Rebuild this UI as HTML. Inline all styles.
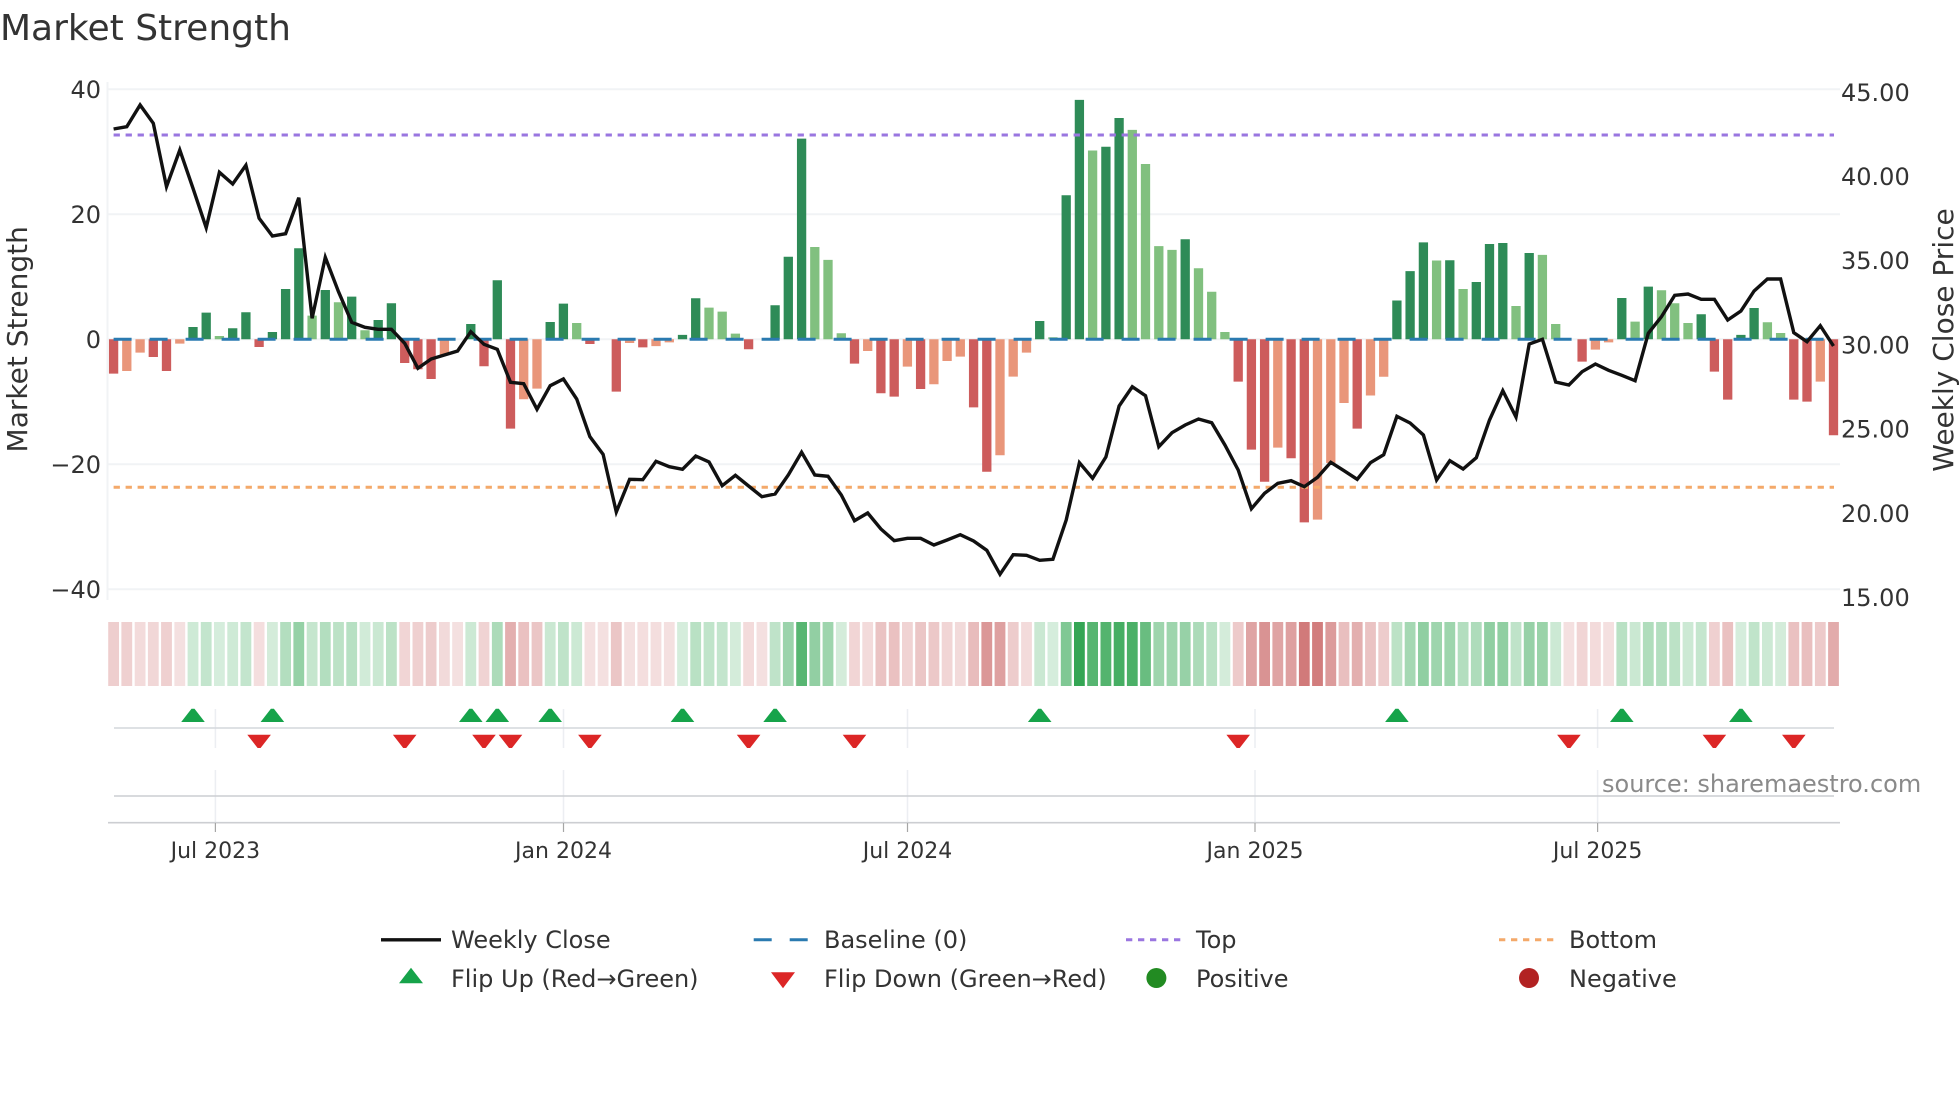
<!DOCTYPE html>
<html lang="en">
<head>
<meta charset="utf-8">
<title>Market Strength</title>
<style>
html,body{margin:0;padding:0;background:#fff;width:1960px;height:1102px;overflow:hidden}
svg{display:block}
text{font-family:"DejaVu Sans",sans-serif;fill:#333}
.y{font-size:24px}
.x{font-size:22px;text-anchor:middle}
.l{font-size:24px}
</style>
</head>
<body>
<svg width="1960" height="1102" viewBox="0 0 1960 1102" xmlns="http://www.w3.org/2000/svg">
<rect width="1960" height="1102" fill="#fff"/>
<text x="0" y="40" font-size="36">Market Strength</text>

<!-- grid -->
<g stroke="#f1f3f5" stroke-width="2" fill="none">
<path d="M108 89.3H1840M108 214.3H1840M108 339.3H1840M108 464.3H1840M108 589.3H1840"/>
<path d="M107.5 82V600"/>
</g>

<!-- bars -->
<g transform="translate(0 339.3) scale(1 -6.25)" fill="none" stroke-width="9.3">
<path stroke="#2e8b57" d="M193 0V1.97M206.2 0V4.27M232.7 0V1.76M245.9 0V4.32M272.4 0V1.17M285.6 0V8.05M298.8 0V14.56M325.3 0V7.89M351.7 0V6.83M378.2 0V3.09M391.4 0V5.76M470.8 0V2.45M497.3 0V9.44M550.2 0V2.77M563.4 0V5.7M682.5 0V.7M695.7 0V6.56M775.1 0V5.44M788.3 0V13.2M801.6 0V32.1M1039.7 0V2.93M1066.2 0V23.04M1079.4 0V38.3M1105.9 0V30.8M1119.1 0V35.4M1185.2 0V16M1396.9 0V6.2M1410.1 0V10.9M1423.4 0V15.5M1449.8 0V12.64M1476.3 0V9.17M1489.5 0V15.25M1502.8 0V15.4M1529.2 0V13.8M1621.8 0V6.6M1648.3 0V8.43M1701.2 0V4M1740.9 0V.7M1754.1 0V5"/>
<path stroke="#81c07f" d="M219.4 0V.53M312.1 0V3.79M338.5 0V5.92M365 0V1.44M576.7 0V2.6M709 0V5.07M722.2 0V4.43M735.4 0V.9M814.8 0V14.77M828 0V12.7M841.3 0V.96M1052.9 0V.32M1092.6 0V30.2M1132.3 0V33.5M1145.5 0V28.05M1158.8 0V14.9M1172 0V14.3M1198.5 0V11.36M1211.7 0V7.6M1224.9 0V1.17M1436.6 0V12.6M1463.1 0V8.05M1516 0V5.33M1542.4 0V13.5M1555.7 0V2.45M1635.1 0V2.83M1661.5 0V7.84M1674.7 0V5.76M1688 0V2.6M1767.4 0V2.72M1780.6 0V1"/>
<path stroke="#cd5c5c" d="M113.6 0V-5.5M153.3 0V-2.83M166.5 0V-5.07M259.1 0V-1.23M404.7 0V-3.79M417.9 0V-4.8M431.1 0V-6.35M484 0V-4.32M510.5 0V-14.3M589.9 0V-.75M616.3 0V-8.37M642.8 0V-1.3M748.6 0V-1.6M854.5 0V-3.9M880.9 0V-8.64M894.2 0V-9.17M920.6 0V-7.95M973.6 0V-10.9M986.8 0V-21.2M1238.2 0V-6.77M1251.4 0V-17.65M1264.6 0V-22.8M1291.1 0V-19.04M1304.3 0V-29.3M1357.2 0V-14.3M1582.1 0V-3.57M1714.4 0V-5.17M1727.7 0V-9.65M1793.8 0V-9.65M1807 0V-9.97M1833.5 0V-15.36"/>
<path stroke="#e9967a" d="M126.8 0V-5.07M140.1 0V-2.13M179.8 0V-.7M444.4 0V-2.5M523.7 0V-9.6M537 0V-7.9M629.6 0V-.6M656 0V-1.1M669.3 0V-.5M867.7 0V-1.87M907.4 0V-4.37M933.9 0V-7.2M947.1 0V-3.47M960.3 0V-2.77M1000 0V-18.56M1013.2 0V-5.97M1026.5 0V-2.13M1277.8 0V-17.33M1317.5 0V-28.85M1330.8 0V-19.8M1344 0V-10.2M1370.5 0V-9M1383.7 0V-6M1595.4 0V-1.65M1608.6 0V-.5M1820.3 0V-6.77"/>
</g>

<!-- reference lines -->
<g fill="none">
<path d="M113.6 339.3H1834" stroke="#2a7ab0" stroke-width="3" stroke-dasharray="18 18"/>
<path d="M113.6 135H1834" stroke="#9a76e0" stroke-width="3" stroke-dasharray="6.3 5.7"/>
<path d="M113.6 487.3H1834" stroke="#f4a96a" stroke-width="3" stroke-dasharray="6.3 5.7"/>
</g>

<!-- weekly close -->
<polyline fill="none" stroke="#111" stroke-width="3.4" stroke-linejoin="miter" points="113.6,129 126.8,126.7 140.1,105 153.3,123.3 166.5,186.7 179.8,150 193,188.3 206.2,227.7 219.4,172.3 232.7,184 245.9,165.3 259.1,218.3 272.4,236 285.6,233.7 298.8,197.7 312.1,318.3 325.3,257.3 338.5,291.7 351.7,322.3 365,327.3 378.2,329.3 391.4,329.3 404.7,343.3 417.9,368.3 431.1,359 444.4,355 457.6,351 470.8,331.7 484,344.3 497.3,349.3 510.5,382.3 523.7,383.7 537,409.3 550.2,385.7 563.4,379 576.7,399 589.9,436.7 603.1,454.3 616.3,512 629.6,479.3 642.8,479.7 656,461.3 669.3,466.7 682.5,469.3 695.7,456 709,462 722.2,485.7 735.4,475.3 748.6,486 761.9,496.7 775.1,494 788.3,475 801.6,452.3 814.8,475 828,476.3 841.3,495 854.5,520.7 867.7,513 880.9,529 894.2,540.7 907.4,538.3 920.6,538.3 933.9,545 947.1,540 960.3,534.7 973.6,541 986.8,550.3 1000,574.3 1013.2,554.7 1026.5,555.3 1039.7,560.3 1052.9,559.3 1066.2,520 1079.4,462.7 1092.6,478.3 1105.9,457 1119.1,406 1132.3,386.7 1145.5,395.7 1158.8,446.7 1172,432.7 1185.2,425 1198.5,419 1211.7,422.7 1224.9,445 1238.2,470 1251.4,508.7 1264.6,493.3 1277.8,483.3 1291.1,480.7 1304.3,486.7 1317.5,477.3 1330.8,462.3 1344,470.7 1357.2,479.3 1370.5,462.7 1383.7,454.7 1396.9,416.3 1410.1,423 1423.4,435 1436.6,480 1449.8,460.7 1463.1,469 1476.3,457.7 1489.5,420 1502.8,390.7 1516,417 1529.2,344 1542.4,339.3 1555.7,382 1568.9,385 1582.1,371.7 1595.4,364 1608.6,370.3 1621.8,375.3 1635.1,380.7 1648.3,333.3 1661.5,316.7 1674.7,295.3 1688,294 1701.2,299.3 1714.4,299.3 1727.7,320 1740.9,311 1754.1,291 1767.4,279 1780.6,279 1793.8,332.7 1807,341.7 1820.3,325.7 1833.5,346"/>

<!-- heat strip -->
<g fill="none" stroke-width="10.8" stroke="#b22222">
<path opacity=".22" d="M113.6 622v64"/><path opacity=".21" d="M126.8 622v64"/><path opacity=".16" d="M140.1 622v64"/><path opacity=".18" d="M153.3 622v64"/><path opacity=".21" d="M166.5 622v64"/><path opacity=".14" d="M179.8 622v64"/><path opacity=".15" d="M259.1 622v64"/><path opacity=".19" d="M404.7 622v64"/><path opacity=".21" d="M417.9 622v64"/><path opacity=".23" d="M431.1 622v64"/><path opacity=".17" d="M444.4 622v64"/><path opacity=".14" d="M457.6 622v64"/><path opacity=".2" d="M484 622v64"/><path opacity=".36" d="M510.5 622v64"/><path opacity=".28" d="M523.7 622v64"/><path opacity=".26" d="M537 622v64"/><path opacity=".14" d="M589.9 622v64"/><path opacity=".14" d="M603.1 622v64"/><path opacity=".26" d="M616.3 622v64"/><path opacity=".14" d="M629.6 622v64"/><path opacity=".15" d="M642.8 622v64"/><path opacity=".15" d="M656 622v64"/><path opacity=".14" d="M669.3 622v64"/><path opacity=".16" d="M748.6 622v64"/><path opacity=".14" d="M761.9 622v64"/><path opacity=".19" d="M854.5 622v64"/><path opacity=".16" d="M867.7 622v64"/><path opacity=".27" d="M880.9 622v64"/><path opacity=".28" d="M894.2 622v64"/><path opacity=".2" d="M907.4 622v64"/><path opacity=".26" d="M920.6 622v64"/><path opacity=".25" d="M933.9 622v64"/><path opacity=".19" d="M947.1 622v64"/><path opacity=".17" d="M960.3 622v64"/><path opacity=".3" d="M973.6 622v64"/><path opacity=".47" d="M986.8 622v64"/><path opacity=".43" d="M1000 622v64"/><path opacity=".23" d="M1013.2 622v64"/><path opacity=".16" d="M1026.5 622v64"/><path opacity=".24" d="M1238.2 622v64"/><path opacity=".41" d="M1251.4 622v64"/><path opacity=".49" d="M1264.6 622v64"/><path opacity=".41" d="M1277.8 622v64"/><path opacity=".43" d="M1291.1 622v64"/><path opacity=".6" d="M1304.3 622v64"/><path opacity=".59" d="M1317.5 622v64"/><path opacity=".45" d="M1330.8 622v64"/><path opacity=".29" d="M1344 622v64"/><path opacity=".36" d="M1357.2 622v64"/><path opacity=".27" d="M1370.5 622v64"/><path opacity=".23" d="M1383.7 622v64"/><path opacity=".14" d="M1568.9 622v64"/><path opacity=".19" d="M1582.1 622v64"/><path opacity=".16" d="M1595.4 622v64"/><path opacity=".14" d="M1608.6 622v64"/><path opacity=".21" d="M1714.4 622v64"/><path opacity=".28" d="M1727.7 622v64"/><path opacity=".28" d="M1793.8 622v64"/><path opacity=".29" d="M1807 622v64"/><path opacity=".24" d="M1820.3 622v64"/><path opacity=".38" d="M1833.5 622v64"/>
</g>
<g fill="none" stroke-width="10.8" stroke="#189a3c">
<path opacity=".21" d="M193 622v64"/><path opacity=".26" d="M206.2 622v64"/><path opacity=".18" d="M219.4 622v64"/><path opacity=".21" d="M232.7 622v64"/><path opacity=".26" d="M245.9 622v64"/><path opacity=".19" d="M272.4 622v64"/><path opacity=".33" d="M285.6 622v64"/><path opacity=".46" d="M298.8 622v64"/><path opacity=".25" d="M312.1 622v64"/><path opacity=".33" d="M325.3 622v64"/><path opacity=".29" d="M338.5 622v64"/><path opacity=".31" d="M351.7 622v64"/><path opacity=".2" d="M365 622v64"/><path opacity=".23" d="M378.2 622v64"/><path opacity=".29" d="M391.4 622v64"/><path opacity=".22" d="M470.8 622v64"/><path opacity=".36" d="M497.3 622v64"/><path opacity=".23" d="M550.2 622v64"/><path opacity=".28" d="M563.4 622v64"/><path opacity=".22" d="M576.7 622v64"/><path opacity=".18" d="M682.5 622v64"/><path opacity=".3" d="M695.7 622v64"/><path opacity=".27" d="M709 622v64"/><path opacity=".26" d="M722.2 622v64"/><path opacity=".19" d="M735.4 622v64"/><path opacity=".28" d="M775.1 622v64"/><path opacity=".43" d="M788.3 622v64"/><path opacity=".72" d="M801.6 622v64"/><path opacity=".47" d="M814.8 622v64"/><path opacity=".42" d="M828 622v64"/><path opacity=".19" d="M841.3 622v64"/><path opacity=".23" d="M1039.7 622v64"/><path opacity=".18" d="M1052.9 622v64"/><path opacity=".55" d="M1066.2 622v64"/><path opacity=".88" d="M1079.4 622v64"/><path opacity=".73" d="M1092.6 622v64"/><path opacity=".74" d="M1105.9 622v64"/><path opacity=".8" d="M1119.1 622v64"/><path opacity=".78" d="M1132.3 622v64"/><path opacity=".65" d="M1145.5 622v64"/><path opacity=".42" d="M1158.8 622v64"/><path opacity=".42" d="M1172 622v64"/><path opacity=".45" d="M1185.2 622v64"/><path opacity=".36" d="M1198.5 622v64"/><path opacity=".3" d="M1211.7 622v64"/><path opacity=".19" d="M1224.9 622v64"/><path opacity=".29" d="M1396.9 622v64"/><path opacity=".39" d="M1410.1 622v64"/><path opacity=".48" d="M1423.4 622v64"/><path opacity=".42" d="M1436.6 622v64"/><path opacity=".42" d="M1449.8 622v64"/><path opacity=".33" d="M1463.1 622v64"/><path opacity=".35" d="M1476.3 622v64"/><path opacity=".48" d="M1489.5 622v64"/><path opacity=".48" d="M1502.8 622v64"/><path opacity=".28" d="M1516 622v64"/><path opacity=".45" d="M1529.2 622v64"/><path opacity=".44" d="M1542.4 622v64"/><path opacity=".22" d="M1555.7 622v64"/><path opacity=".3" d="M1621.8 622v64"/><path opacity=".23" d="M1635.1 622v64"/><path opacity=".34" d="M1648.3 622v64"/><path opacity=".33" d="M1661.5 622v64"/><path opacity=".29" d="M1674.7 622v64"/><path opacity=".22" d="M1688 622v64"/><path opacity=".25" d="M1701.2 622v64"/><path opacity=".18" d="M1740.9 622v64"/><path opacity=".27" d="M1754.1 622v64"/><path opacity=".22" d="M1767.4 622v64"/><path opacity=".19" d="M1780.6 622v64"/>
</g>

<!-- lower panel lines -->
<g fill="none">
<path d="M215.4 709V748M563.5 709V748M907.5 709V748M1255 709V748M1597.6 709V748M215.4 770V823M563.5 770V823M907.5 770V823M1255 770V823M1597.6 770V823" stroke="#eceef2" stroke-width="1.5"/>
<path d="M114 728H1834" stroke="#d4d7dc" stroke-width="1.6"/>
<path d="M114 796H1834" stroke="#ccced2" stroke-width="1.6"/>
<path d="M108 822.7H1840" stroke="#ccced2" stroke-width="1.6"/>
<path d="M215.4 823V832M563.5 823V832M907.5 823V832M1255 823V832M1597.6 823V832" stroke="#a6a6a6" stroke-width="1.2"/>
</g>

<!-- flips -->
<path fill="#16a34a" d="M181.2 722h23.6l-10.3-13.3h-3zM260.6 722h23.6l-10.3-13.3h-3zM459 722h23.6l-10.3-13.3h-3zM485.5 722h23.6l-10.3-13.3h-3zM538.4 722h23.6l-10.3-13.3h-3zM670.7 722h23.6l-10.3-13.3h-3zM763.3 722h23.6l-10.3-13.3h-3zM1027.9 722h23.6l-10.3-13.3h-3zM1385.1 722h23.6l-10.3-13.3h-3zM1610 722h23.6l-10.3-13.3h-3zM1729.1 722h23.6l-10.3-13.3h-3z"/>
<path fill="#dc2626" d="M247.3 734.7h23.6l-10.3 13.3h-3zM392.9 734.7h23.6l-10.3 13.3h-3zM472.2 734.7h23.6l-10.3 13.3h-3zM498.7 734.7h23.6l-10.3 13.3h-3zM578.1 734.7h23.6l-10.3 13.3h-3zM736.8 734.7h23.6l-10.3 13.3h-3zM842.7 734.7h23.6l-10.3 13.3h-3zM1226.4 734.7h23.6l-10.3 13.3h-3zM1557.1 734.7h23.6l-10.3 13.3h-3zM1702.6 734.7h23.6l-10.3 13.3h-3zM1782 734.7h23.6l-10.3 13.3h-3z"/>

<!-- axis labels -->
<g class="y" text-anchor="end">
<text x="101" y="98">40</text>
<text x="101" y="223">20</text>
<text x="101" y="348">0</text>
<text x="101" y="473">−20</text>
<text x="101" y="598">−40</text>
</g>
<g class="y">
<text x="1841" y="101">45.00</text>
<text x="1841" y="185">40.00</text>
<text x="1841" y="269">35.00</text>
<text x="1841" y="353.5">30.00</text>
<text x="1841" y="437.5">25.00</text>
<text x="1841" y="522">20.00</text>
<text x="1841" y="606">15.00</text>
</g>
<text transform="translate(27 339.3) rotate(-90)" font-size="28" text-anchor="middle">Market Strength</text>
<text transform="translate(1953 340) rotate(-90)" font-size="28" text-anchor="middle">Weekly Close Price</text>
<g class="x">
<text x="215.4" y="858">Jul 2023</text>
<text x="563.5" y="858">Jan 2024</text>
<text x="907.5" y="858">Jul 2024</text>
<text x="1255" y="858">Jan 2025</text>
<text x="1597.6" y="858">Jul 2025</text>
</g>
<text x="1602" y="792" font-size="24" style="fill:#8a8a8a">source: sharemaestro.com</text>

<!-- legend -->
<g fill="none">
<path d="M381 939.8H441" stroke="#111" stroke-width="3.4"/>
<path d="M753.7 939.8H808" stroke="#2a7ab0" stroke-width="3" stroke-dasharray="18 18"/>
<path d="M1126 939.8H1181" stroke="#9a76e0" stroke-width="3" stroke-dasharray="6.3 5.7"/>
<path d="M1499 939.8H1554" stroke="#f4a96a" stroke-width="3" stroke-dasharray="6.3 5.7"/>
</g>
<path fill="#16a34a" d="M399 983.3h24l-12-15.6z"/>
<path fill="#dc2626" d="M771 972.3h24l-12 16z"/>
<circle cx="1156.4" cy="978" r="10" fill="#228b22"/>
<circle cx="1529" cy="978" r="10" fill="#b22222"/>
<g class="l">
<text x="451" y="948">Weekly Close</text>
<text x="824" y="948">Baseline (0)</text>
<text x="1196" y="948">Top</text>
<text x="1569" y="948">Bottom</text>
<text x="451" y="987">Flip Up (Red→Green)</text>
<text x="824" y="987">Flip Down (Green→Red)</text>
<text x="1196" y="987">Positive</text>
<text x="1569" y="987">Negative</text>
</g>
</svg>
</body>
</html>
